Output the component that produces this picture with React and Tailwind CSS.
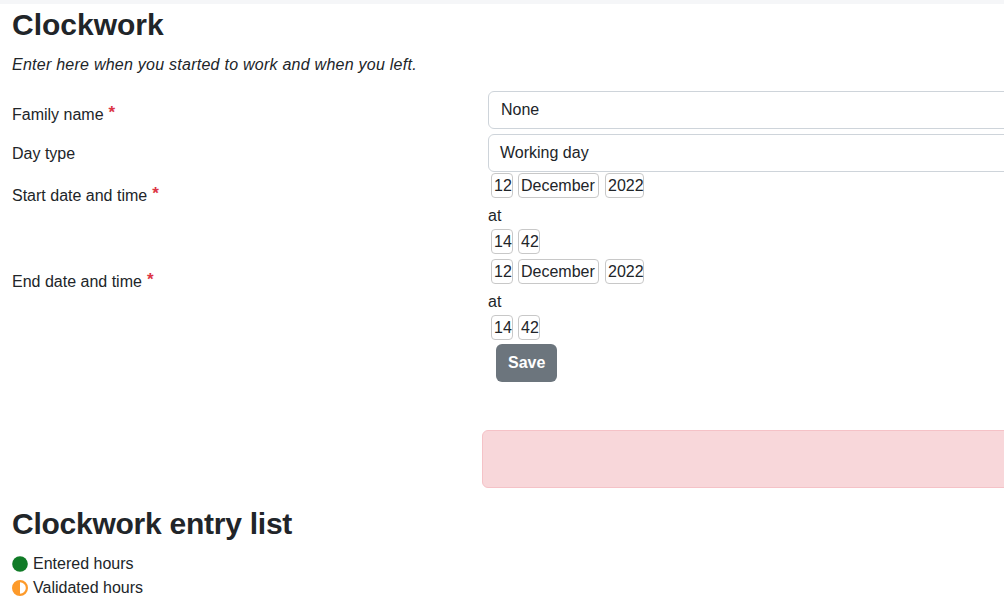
import React from "react";

function Req() {
  return (
    <span className="relative -top-[2px] ml-[5px] text-[17px] font-bold text-[#dc3545]">*</span>
  );
}

function Box({ children, w, className = "" }) {
  return (
    <div
      className={`h-[25px] ${w} rounded-[4px] border border-[#c8c8c8] bg-white pl-[2px] leading-[23px] whitespace-nowrap ${className}`}
    >
      {children}
    </div>
  );
}

function DateTime({ day, month, year, hour, minute }) {
  return (
    <div className="flex flex-col pt-[1px]">
      <div className="flex pl-[3px]">
        <Box w="w-[22px]">{day}</Box>
        <Box w="w-[81px]" className="ml-[5px]">{month}</Box>
        <Box w="w-[39px]" className="ml-[6px]">{year}</Box>
      </div>
      <div className="mt-[6px] leading-[24px]">at</div>
      <div className="mt-[1px] flex pl-[3px]">
        <Box w="w-[22px]">{hour}</Box>
        <Box w="w-[22px]" className="ml-[5px]">{minute}</Box>
      </div>
    </div>
  );
}

function HalfCircle() {
  return (
    <svg width="16" height="16" viewBox="0 0 16 16">
      <circle cx="8" cy="8" r="6.9" fill="#fff" stroke="#fd9a2a" strokeWidth="2.2" />
      <path d="M8 1 A7 7 0 0 0 8 15 Z" fill="#fd9a2a" />
    </svg>
  );
}

export default function App() {
  return (
    <div className="min-h-[603px] w-full overflow-hidden bg-white font-['Liberation_Sans',Arial,sans-serif] text-[16px] text-[#212529]">
      <div className="h-[4px] bg-[#f5f6f8]" />
      <div className="w-[1400px] px-[12px]">
        <h2 className="mt-[3px] h-[36px] text-[30px] font-bold leading-[36px]">Clockwork</h2>
        <p className="mt-[10px] italic leading-[24px] tracking-[0.25px]">
          Enter here when you started to work and when you left.
        </p>

        <div className="mt-[14px] flex">
          <div className="w-[476px] pt-[12px] leading-[24px]">
            Family name<Req />
          </div>
          <div className="h-[38px] w-[700px] rounded-[6px] border border-[#ced4da] pl-[12px] leading-[36px]">
            None
          </div>
        </div>

        <div className="mt-[5px] flex">
          <div className="w-[476px] pt-[8px] leading-[24px]">Day type</div>
          <div className="h-[38px] w-[700px] rounded-[6px] border border-[#ced4da] pl-[11px] leading-[36px]">
            Working day
          </div>
        </div>

        <div className="flex">
          <div className="w-[476px] pt-[12px] leading-[24px]">
            Start date and time<Req />
          </div>
          <DateTime day="12" month="December" year="2022" hour="14" minute="42" />
        </div>

        <div className="mt-[4px] flex">
          <div className="w-[476px] pt-[12px] leading-[24px]">
            End date and time<Req />
          </div>
          <DateTime day="12" month="December" year="2022" hour="14" minute="42" />
        </div>

        <div className="mt-[4px] flex pl-[484px]">
          <button className="h-[38px] rounded-[6px] bg-[#6c757d] px-[12px] font-bold leading-[38px] text-white">
            Save
          </button>
        </div>

        <div className="ml-[470px] mt-[48px] h-[58px] w-[700px] rounded-[6px] border border-[#f5c2c7] bg-[#f8d7da]" />

        <h3 className="mt-[18px] h-[36px] text-[30px] font-bold leading-[36px] tracking-[-0.25px]">
          Clockwork entry list
        </h3>

        <ul className="mt-[10px]">
          <li className="flex items-center gap-[5px] leading-[24px]">
            <svg width="16" height="16" viewBox="0 0 16 16">
              <circle cx="8" cy="8" r="7.8" fill="#107b27" />
            </svg>
            Entered hours
          </li>
          <li className="flex items-center gap-[5px] leading-[24px]">
            <HalfCircle />
            Validated hours
          </li>
        </ul>
      </div>
    </div>
  );
}
